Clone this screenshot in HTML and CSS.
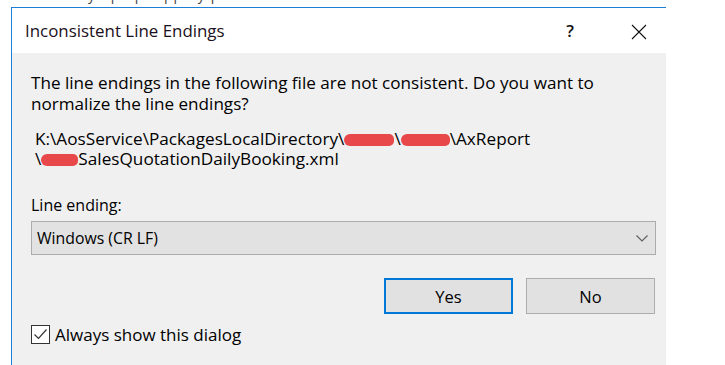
FILE: index.html
```html
<!DOCTYPE html>
<html lang="en">
<head>
    <meta charset="UTF-8">
    <title>Inconsistent Line Endings</title>
    <link rel="stylesheet" href="styles.css">
</head>
<body>

    <!-- край окна под диалогом -->
    <div class="backdrop"><span class="backdrop-text">y p p qp yp</span></div>

    <div class="dialog">
        <div class="titlebar">
            <div class="title">Inconsistent Line Endings</div>
            <div class="help">?</div>
            <div class="close">
                <svg width="16" height="16" viewBox="0 0 16 16">
                    <path d="M1 1 L15 15 M15 1 L1 15" stroke="#111" stroke-width="1.1" fill="none"/>
                </svg>
            </div>
        </div>

        <div class="content">
            <p class="message">The line endings in the following file are not consistent. Do you want to<br>normalize the line endings?</p>
            <p class="path">K:\AosService\PackagesLocalDirectory\<span class="redact r1"></span>\<span class="redact r2"></span>\AxReport<br>\<span class="redact r3"></span>SalesQuotationDailyBooking.xml</p>

            <div class="label">Line ending:</div>
            <div class="select">
                <span>Windows (CR LF)</span>
                <svg width="12" height="7" viewBox="0 0 12 7">
                    <path d="M0.5 0.5 L6 6 L11.5 0.5" stroke="#606060" stroke-width="1.2" fill="none"/>
                </svg>
            </div>

            <div class="buttons">
                <div class="button default">Yes</div>
                <div class="button">No</div>
            </div>

            <div class="check">
                <svg width="19" height="19" viewBox="0 0 19 19">
                    <rect x="0.5" y="0.5" width="18" height="18" fill="#fff" stroke="#333"/>
                    <path d="M3.5 9.5 L7.5 13.5 L15.5 4.5" stroke="#333" stroke-width="1.2" fill="none"/>
                </svg>
                <span>Always show this dialog</span>
            </div>
        </div>
    </div>

</body>
</html>
```

FILE: styles.css
```css
body {
    margin: 0;
    background-color: #ffffff;
    font-family: "Open Sans", "Noto Sans", sans-serif;
    color: #000;
    overflow: hidden;
    height: 365px;
}
.backdrop {
    height: 7px;
    overflow: hidden;
    padding-left: 88px;
}
.backdrop-text {
    display: block;
    font-size: 14px;
    line-height: 14px;
    margin-top: -12px;
    letter-spacing: 6px;
    color: #444;
}
.dialog {
    margin-left: 11px;
    width: 655px;
    height: 358px;
    border-top: 1px solid #1c7fd6;
    border-left: 1px solid #1c7fd6;
    background-color: #f0f0f0;
    box-sizing: border-box;
}
.titlebar {
    background-color: #ffffff;
    height: 45px;
    display: flex;
    align-items: center;
    padding-left: 13px;
}
.title {
    font-size: 16.9px;
    color: #1a1020;
}
.help {
    margin-left: auto;
    font-size: 17px;
    font-weight: 600;
    color: #111;
    margin-right: 57px;
}
.close {
    width: 16px;
    height: 16px;
    margin-right: 19px;
}
.content {
    padding: 19px 10px 0 19px;
}
.message {
    margin: 0;
    font-size: 17.1px;
    line-height: 21px;
    white-space: nowrap;
}
.path {
    margin: 15px 0 0 4px;
    font-size: 17.2px;
    line-height: 20px;
    white-space: nowrap;
}
.redact {
    display: inline-block;
    height: 12px;
    background-color: #e8484a;
    border-radius: 6px 5px 5px 6px;
    vertical-align: -1px;
}
.r1 { width: 50px; }
.r2 { width: 49px; }
.r3 { width: 37px; }
.label {
    margin-top: 26px;
    font-size: 16px;
    line-height: 20px;
}
.select {
    margin-top: 6px;
    height: 34px;
    border: 1px solid #acacac;
    background-color: #e2e2e2;
    box-sizing: border-box;
    display: flex;
    align-items: center;
    justify-content: space-between;
    padding: 0 7px 0 5px;
    font-size: 15.8px;
}
.buttons {
    display: flex;
    justify-content: flex-end;
    gap: 13px;
    margin-top: 23px;
    padding-right: 1px;
}
.button {
    width: 129px;
    height: 36px;
    box-sizing: border-box;
    border: 1px solid #adadad;
    background-color: #e1e1e1;
    display: flex;
    align-items: center;
    justify-content: center;
    font-size: 16.5px;
}
.button.default {
    border: 2px solid #0078d7;
}
.check {
    display: flex;
    align-items: center;
    gap: 5px;
    margin-top: 9px;
    font-size: 17px;
}
```
